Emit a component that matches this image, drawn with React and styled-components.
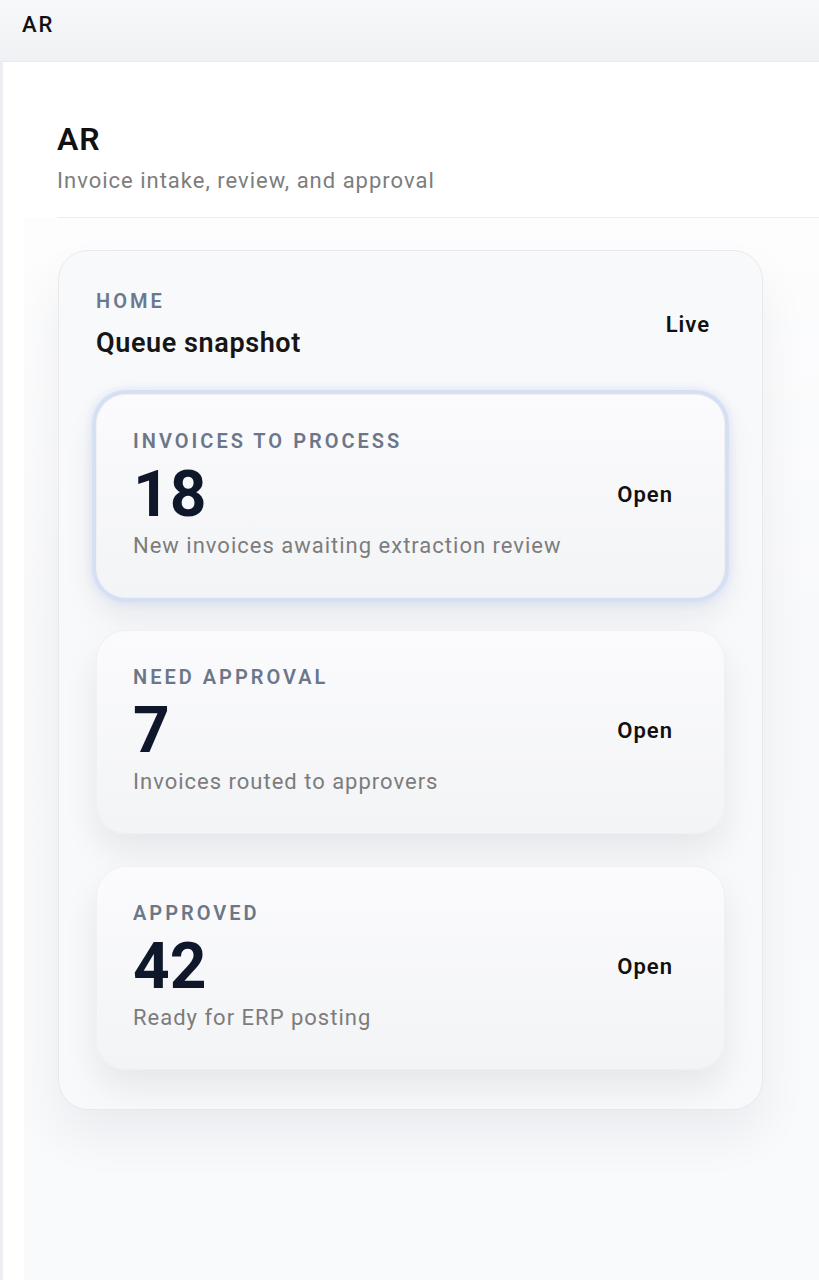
import React from 'react';
import styled, { createGlobalStyle } from 'styled-components';

const GlobalStyle = createGlobalStyle`
  html, body {
    margin: 0;
    padding: 0;
    background: #ffffff;
    font-family: Roboto, 'Liberation Sans', sans-serif;
    color: #111111;
  }
  * {
    box-sizing: border-box;
  }
`

const TopBar = styled.div`
  height: 62px;
  padding: 12px 0 0 22px;
  font-size: 22px;
  line-height: 26px;
  font-weight: 500;
  letter-spacing: 2px;
  color: #111;
  background: linear-gradient(180deg, #f8f9fa 0%, #eff1f4 100%);
  border-bottom: 1px solid #e9ebee;
`

const Main = styled.div`
  display: flex;
  flex-direction: column;
  min-height: calc(100vh - 62px);
  border-left: 3px solid #eceef1;
  background: #ffffff;
`

const PageHeader = styled.div`
  margin-left: 54px;
  padding-top: 58px;
  padding-bottom: 22px;
  border-bottom: 1px solid #eceef1;
`

const PageTitle = styled.h1`
  margin: 0;
  font-size: 32px;
  line-height: 38px;
  font-weight: 600;
  letter-spacing: 1px;
  color: #111;
`

const PageSubtitle = styled.div`
  margin-top: 9px;
  font-size: 22px;
  line-height: 28px;
  letter-spacing: 1px;
  color: #7d7d7d;
`

const Content = styled.div`
  flex: 1;
  margin-left: 21px;
  padding: 32px 34px 60px;
  background: linear-gradient(180deg, #fdfdfe 0%, #f8f9fb 40%, #f9fafc 100%);
`

const Panel = styled.section`
  width: 705px;
  padding: 38px 37px 39px;
  border: 1px solid #e7e9ed;
  border-radius: 30px;
  background: #f8f9fb;
  box-shadow: 0 26px 50px rgba(15, 23, 42, 0.06);
`

const PanelHead = styled.div`
  display: flex;
  align-items: center;
  justify-content: space-between;
`

const Eyebrow = styled.div`
  font-size: 20px;
  line-height: 24px;
  font-weight: 600;
  letter-spacing: 3px;
  text-transform: uppercase;
  color: ${p => p.$tone || '#6b7789'};
`

const PanelTitle = styled.div`
  margin-top: 14px;
  font-size: 27px;
  line-height: 32px;
  font-weight: 600;
  letter-spacing: 0.6px;
  color: #161616;
`

const GhostButton = styled.button`
  border: 0;
  background: transparent;
  padding: 8px 15px;
  font-family: inherit;
  font-size: 22px;
  font-weight: 600;
  letter-spacing: 1px;
  color: #111;
  cursor: pointer;
`

const CardList = styled.div`
  display: flex;
  flex-direction: column;
  gap: 32px;
  margin-top: 35px;
`

const QueueCard = styled.div`
  display: flex;
  align-items: center;
  justify-content: space-between;
  padding: 34px 36px 37px 36px;
  border-radius: 30px;
  border: 1px solid #eef0f3;
  background: linear-gradient(180deg, #fbfbfd 0%, #f3f4f6 100%);
  box-shadow: ${p => p.$active
    ? '0 0 0 4px #d5e0f5, 0 0 8px 5px rgba(200, 214, 242, 0.55), 0 18px 34px rgba(15, 23, 42, 0.08)'
    : '0 18px 34px rgba(15, 23, 42, 0.08)'};
`

const Count = styled.div`
  margin-top: 10px;
  font-size: 64px;
  line-height: 64px;
  font-weight: 700;
  color: #0f172a;
`

const Note = styled.div`
  margin-top: 5px;
  font-size: 22px;
  line-height: 28px;
  letter-spacing: 1px;
  color: #7c7c7c;
`

const queues = [
  { label: 'Invoices to process', count: 18, note: 'New invoices awaiting extraction review', active: true },
  { label: 'Need approval', count: 7, note: 'Invoices routed to approvers' },
  { label: 'Approved', count: 42, note: 'Ready for ERP posting' },
];

const App = () => {
  return (
    <>
      <GlobalStyle />
      <TopBar>AR</TopBar>
      <Main>
        <PageHeader>
          <PageTitle>AR</PageTitle>
          <PageSubtitle>Invoice intake, review, and approval</PageSubtitle>
        </PageHeader>
        <Content>
          <Panel>
            <PanelHead>
              <div>
                <Eyebrow $tone="#6a7890">Home</Eyebrow>
                <PanelTitle>Queue snapshot</PanelTitle>
              </div>
              <GhostButton>Live</GhostButton>
            </PanelHead>
            <CardList>
              {queues.map((q, i) => (
                <QueueCard key={i} $active={q.active}>
                  <div>
                    <Eyebrow>{q.label}</Eyebrow>
                    <Count>{q.count}</Count>
                    <Note>{q.note}</Note>
                  </div>
                  <GhostButton>Open</GhostButton>
                </QueueCard>
              ))}
            </CardList>
          </Panel>
        </Content>
      </Main>
    </>
  );
};

export default App;
